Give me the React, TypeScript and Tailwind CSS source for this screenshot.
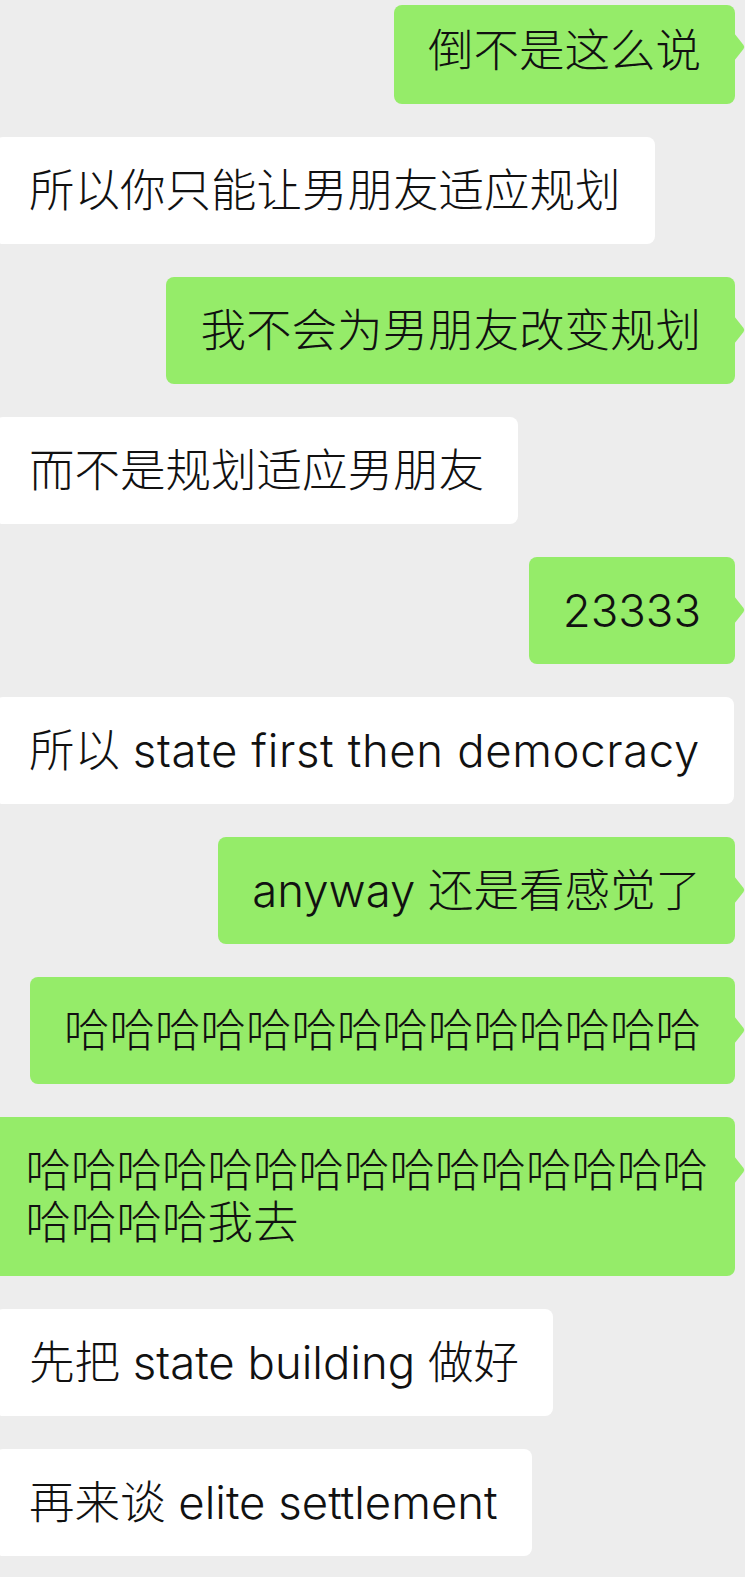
import React from 'react';

type Msg = { side: 'me' | 'them'; text: React.ReactNode; first?: boolean; tall?: boolean };

const messages: Msg[] = [
  { side: 'me', text: '倒不是这么说', first: true },
  { side: 'them', text: '所以你只能让男朋友适应规划' },
  { side: 'me', text: '我不会为男朋友改变规划' },
  { side: 'them', text: '而不是规划适应男朋友' },
  { side: 'me', text: '23333' },
  {
    side: 'them',
    text: (
      <>
        所以 <span className="tracking-[0.014em]">state first then democracy</span>
      </>
    ),
  },
  { side: 'me', text: 'anyway 还是看感觉了' },
  { side: 'me', text: '哈哈哈哈哈哈哈哈哈哈哈哈哈哈' },
  {
    side: 'me',
    tall: true,
    text: (
      <>
        哈哈哈哈哈哈哈哈哈哈哈哈哈哈哈
        <br />
        哈哈哈哈我去
      </>
    ),
  },
  { side: 'them', text: '先把 state building 做好' },
  { side: 'them', text: '再来谈 elite settlement' },
];

const Tail = ({ top }: { top: number }) => (
  <svg
    className="absolute right-[-10px]"
    style={{ top }}
    width="11"
    height="28"
    viewBox="0 0 11 28"
  >
    <path d="M0 0 L9.5 12 Q11 14 9.5 16 L0 28 Z" fill="#95ec69" />
  </svg>
);

const Bubble = ({ msg }: { msg: Msg }) => {
  const mine = msg.side === 'me';
  return (
    <div className={mine ? 'flex justify-end pr-[10px]' : 'flex justify-start'}>
      <div
        className={
          'relative shrink-0 whitespace-nowrap rounded-[8px] text-[45.5px] leading-[52px] text-[#111] ' +
          (mine ? 'bg-[#95ec69] ' : 'bg-white ml-[-5px] ') +
          (msg.tall ? 'pl-[34px] pr-[27px] ' : 'px-[34px] ') +
          (msg.first ? 'pt-[20px] pb-[27px]' : 'py-[27.5px]')
        }
      >
        {msg.text}
        {mine && <Tail top={msg.first ? 28 : 39} />}
      </div>
    </div>
  );
};

export default function App() {
  return (
    <div
      className="min-h-screen w-full overflow-hidden bg-[#ededed] pt-[5px] pb-6 font-light"
      style={{ fontFamily: "Inter, 'Noto Sans CJK SC', sans-serif" }}
    >
      <div className="flex flex-col gap-[33px]">
        {messages.map((m, i) => (
          <Bubble key={i} msg={m} />
        ))}
      </div>
    </div>
  );
}
